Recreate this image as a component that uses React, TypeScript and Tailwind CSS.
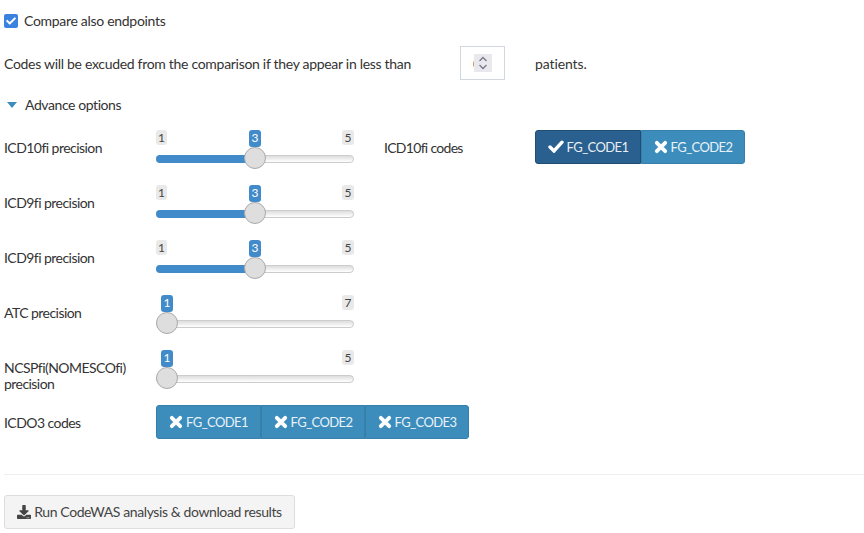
import React from 'react';
import { FaCheck, FaDownload } from 'react-icons/fa';

const FONT = "font-['Lato','Noto_Sans',sans-serif]";

type SliderProps = { min: number; max: number; value: number };

const Slider: React.FC<SliderProps> = ({ min, max, value }) => {
    const ratio = (value - min) / (max - min);
    // handle is 22px wide and travels inside the 198px bar
    const center = 11 + ratio * 176;

    return (
        <div className="relative w-[198px] h-[39px] mt-[9px] tracking-normal">
            <div className="flex justify-between">
                <span className={`h-[15px] w-[11px] text-center rounded-[3px] bg-[#e9e9e9] text-[#444] text-[12px] leading-[15px] ${ratio === 0 ? 'invisible' : ''}`}>{min}</span>
                <span className="h-[15px] w-[12px] text-center rounded-[3px] bg-[#e9e9e9] text-[#444] text-[12px] leading-[15px]">{max}</span>
            </div>
            <div className="absolute left-0 right-0 top-[25px] h-[8px] rounded-full border border-[#cccccc] bg-gradient-to-b from-[#dddddd] to-[#ffffff]" />
            {ratio > 0 && (
                <div className="absolute left-0 top-[25px] h-[8px] rounded-l-full bg-[#428bca]" style={{ width: center }} />
            )}
            <span
                className="absolute top-0 h-[17px] w-[12px] -translate-x-1/2 rounded-[3px] bg-[#428bca] text-center text-white text-[12px] leading-[15px]"
                style={{ left: center }}
            >
                {value}
            </span>
            <div
                className="absolute top-[17px] h-[22px] w-[22px] -translate-x-1/2 rounded-full border border-[#aaaaaa] bg-[#dedede]"
                style={{ left: center }}
            />
        </div>
    );
};

const CrossIcon = () => (
    <svg width="14" height="14" viewBox="0 0 14 14" fill="none" stroke="white" strokeWidth="3.8" strokeLinecap="round" className="-mt-[1px]">
        <path d="M2.8 2.8 L11.2 11.2 M11.2 2.8 L2.8 11.2" />
    </svg>
);

const CheckIcon = () => (
    <svg width="16" height="13" viewBox="0 0 16 13" fill="none" stroke="white" strokeWidth="3.4" strokeLinecap="round" className="-mt-[1px]">
        <path d="M2 7 L6 11 L14 2.2" />
    </svg>
);

type CodeButtonProps = { label: string; checked?: boolean; width: string };

const CodeButton: React.FC<CodeButtonProps> = ({ label, checked, width }) => (
    <button className={`h-[34px] ${width} flex items-center justify-center gap-[3px] border text-[13px] tracking-[-0.6px] first:rounded-l-[3px] last:rounded-r-[3px] ${checked ? 'bg-[#29608f] border-[#204d74] text-[#e8eef4]' : 'bg-[#3c8dbc] border-[#367fa9] text-[#e8f2f8]'}`}>
        {checked ? <CheckIcon /> : <CrossIcon />}
        <span className="mt-[1px]">{label}</span>
    </button>
);

const rows = [
    { label: 'ICD9fi precision', min: 1, max: 5, value: 3 },
    { label: 'ICD9fi precision', min: 1, max: 5, value: 3 },
    { label: 'ATC precision', min: 1, max: 7, value: 1 },
    { label: 'NCSPfi(NOMESCOfi) precision', min: 1, max: 5, value: 1 },
];

const App: React.FC = () => {
    return (
        <div className={`${FONT} w-[864px] h-[533px] overflow-hidden bg-white pl-[4px] text-[14px] tracking-[-0.3px] [font-variant-ligatures:none] text-[#333]`}>
            {/* Top options */}
            <div className="flex items-center h-[14px] mt-[14px] gap-[6px]">
                <span className="flex items-center justify-center w-[14px] h-[14px] rounded-[2px] bg-[#3b82e0]">
                    <FaCheck className="w-[10px] h-[10px] text-white" />
                </span>
                <span className="mb-[2px]">Compare also endpoints</span>
            </div>
            <div className="flex items-center h-[34px] mt-[18px]">
                <span className="w-[456px]">Codes will be excuded from the comparison if they appear in less than</span>
                <div className="relative w-[45px] h-[34px] border border-[#d2d6de]">
                    <span className="absolute left-[12px] top-[6px] text-[#555]">0</span>
                    <div className="absolute left-[13px] top-[7px] w-[18px] h-[18px] bg-[#e9e9ed] flex flex-col items-center justify-center">
                        <svg width="10" height="14" viewBox="0 0 10 14" fill="none" stroke="#77778a" strokeWidth="1.3">
                            <path d="M1.5 5 L5 1.5 L8.5 5" />
                            <path d="M1.5 9 L5 12.5 L8.5 9" />
                        </svg>
                    </div>
                </div>
                <span className="ml-[30px] tracking-[-0.1px]">patients.</span>
            </div>
            <div className="flex items-center h-[20px] mt-[15px] gap-[8px] pl-[3px]">
                <svg width="10" height="6" viewBox="0 0 10 6"><path d="M0 0 H10 L5 6 Z" fill="#3c8dbc" /></svg>
                <span className="mb-[2px] tracking-[-0.42px]">Advance options</span>
            </div>

            {/* Precision sliders */}
            <div className="flex h-[55px] mt-[6px]">
                <div className="w-[152px] pt-[19px] leading-4 tracking-[-0.55px]">ICD10fi precision</div>
                <Slider min={1} max={5} value={3} />
                <div className="w-[151px] ml-[30px] pt-[19px] leading-4 tracking-[-0.7px]">ICD10fi codes</div>
                <div className="flex mt-[9px]">
                    <CodeButton label="FG_CODE1" checked width="w-[106px]" />
                    <CodeButton label="FG_CODE2" width="w-[104px]" />
                </div>
            </div>
            {rows.map((row, i) => (
                <div key={i} className="flex h-[55px]">
                    <div className="w-[152px] pt-[19px] leading-4 tracking-[-0.55px]">{row.label}</div>
                    <Slider min={row.min} max={row.max} value={row.value} />
                </div>
            ))}
            <div className="flex items-center h-[34px] mt-[9px]">
                <div className="w-[152px] tracking-[-0.55px]">ICDO3 codes</div>
                <div className="flex">
                    <CodeButton label="FG_CODE1" width="w-[105px]" />
                    <CodeButton label="FG_CODE2" width="w-[104px]" />
                    <CodeButton label="FG_CODE3" width="w-[104px]" />
                </div>
            </div>

            <hr className="mt-[35px] border-t border-[#eeeeee]" />

            <button className="flex items-center justify-center gap-[3px] mt-[20px] w-[291px] h-[34px] rounded-[3px] border border-[#dddddd] bg-[#f4f4f4] text-[#444] tracking-[-0.4px]">
                <FaDownload className="w-[14px] h-[14px]" />
                <span className="mb-[2px]">Run CodeWAS analysis &amp; download results</span>
            </button>
        </div>
    );
};

export default App;
